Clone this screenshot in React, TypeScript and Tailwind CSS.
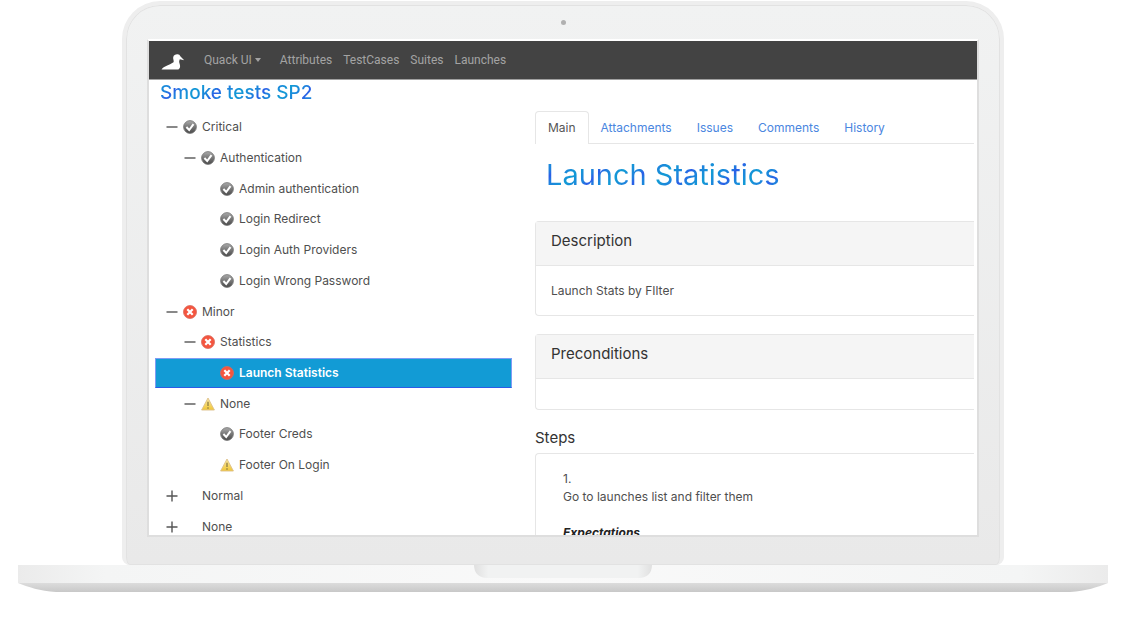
import { ReactNode } from "react";

type Status = "passed" | "failed" | "warning";

interface TreeNode {
  label: string;
  level: 0 | 1 | 2;
  toggle?: "open" | "closed";
  status?: Status;
  selected?: boolean;
}

const treeNodes: TreeNode[] = [
  { label: "Critical", level: 0, toggle: "open", status: "passed" },
  { label: "Authentication", level: 1, toggle: "open", status: "passed" },
  { label: "Admin authentication", level: 2, status: "passed" },
  { label: "Login Redirect", level: 2, status: "passed" },
  { label: "Login Auth Providers", level: 2, status: "passed" },
  { label: "Login Wrong Password", level: 2, status: "passed" },
  { label: "Minor", level: 0, toggle: "open", status: "failed" },
  { label: "Statistics", level: 1, toggle: "open", status: "failed" },
  { label: "Launch Statistics", level: 2, status: "failed", selected: true },
  { label: "None", level: 1, toggle: "open", status: "warning" },
  { label: "Footer Creds", level: 2, status: "passed" },
  { label: "Footer On Login", level: 2, status: "warning" },
  { label: "Normal", level: 0, toggle: "closed" },
  { label: "None", level: 0, toggle: "closed" },
];

const indents = ["pl-[10px]", "pl-[28px]", "pl-[64px]"];
const navLinks = ["Attributes", "TestCases", "Suites", "Launches"];
const tabs = ["Attachments", "Issues", "Comments", "History"];

const gradientText =
  "bg-[repeating-linear-gradient(135deg,#129bd5_0px,#1f7fde_12px,#2b5ce8_16px,#1f7fde_20px,#129bd5_32px)] bg-clip-text text-transparent";

function StatusIcon({ status }: { status: Status }) {
  if (status === "warning") {
    return (
      <svg viewBox="0 0 14 14" className="size-3.5" aria-hidden="true">
        <defs>
          <linearGradient id="warning" x1="0" y1="0" x2="0" y2="1">
            <stop offset="0" stopColor="#fbeba4" />
            <stop offset="1" stopColor="#f0c636" />
          </linearGradient>
        </defs>
        <path d="M7 1 13.400 13H.6Z" fill="url(#warning)" stroke="#dcc08a" strokeWidth="0.9" strokeLinejoin="round" />
        <path d="M7 4.800v4.200M7 10.300v1.400" stroke="#857540" strokeWidth="1.200" />
      </svg>
    );
  }
  if (status === "failed") {
    return (
      <svg viewBox="0 0 14 14" className="size-3.5" aria-hidden="true">
        <circle cx="7" cy="7" r="6.500" fill="#f4553f" stroke="#d9695c" strokeWidth="0.8" />
        <path d="m4.300 4.300 5.400 5.400m0-5.400L4.300 9.700" stroke="#fff" strokeWidth="2.200" />
      </svg>
    );
  }
  return (
    <svg viewBox="0 0 14 14" className="size-3.5" aria-hidden="true">
      <defs>
        <linearGradient id="passed" x1="0" y1="0" x2="0" y2="1">
          <stop offset="0" stopColor="#ababab" />
          <stop offset="0.5" stopColor="#777" />
          <stop offset="1" stopColor="#484848" />
        </linearGradient>
      </defs>
      <circle cx="7" cy="7" r="6.400" fill="url(#passed)" stroke="#757575" strokeWidth="0.8" />
      <path d="m3.400 7 2.800 3 4.300-5.800" fill="none" stroke="#fff" strokeWidth="2" />
    </svg>
  );
}

function ToggleIcon({ open }: { open: boolean }) {
  return (
    <svg viewBox="0 0 12 12" className="size-3" stroke="#555" strokeWidth="1.400" aria-hidden="true">
      <path d={open ? "M.5 6h11" : "M.5 6h11M6 .5v11"} />
    </svg>
  );
}

function TreeRow({ node }: { node: TreeNode }) {
  return (
    <li
      className={`flex items-center border ${indents[node.level]} ${
        node.selected
          ? "border-[#7f9cf5] border-b-[#2b5ce8] bg-[#129bd5] font-semibold text-white"
          : "border-transparent"
      }`}
    >
      {node.toggle && (
        <button type="button" aria-label={`Toggle ${node.label}`} className="mr-[5px] w-3">
          <ToggleIcon open={node.toggle === "open"} />
        </button>
      )}
      <span className="mr-[5px] w-3.5">{node.status && <StatusIcon status={node.status} />}</span>
      <a href="#">{node.label}</a>
    </li>
  );
}

function Card({ title, children }: { title: string; children?: ReactNode }) {
  return (
    <section className="rounded-l border border-r-0 border-[#e6e6e6]">
      <h3 className="h-[44px] border-b border-[#e6e6e6] bg-[#f5f5f5] px-[15px] pt-2 text-[15px] leading-[22px] text-[#333]">
        {title}
      </h3>
      {children}
    </section>
  );
}

function Navbar() {
  return (
    <nav className="flex h-[39px] items-center border-b border-[#a0a0a0] bg-[#434343] pb-px pl-3 font-[Roboto,sans-serif] text-[12px] text-[#a3a3a3]">
      <a href="#" aria-label="Home" className="pt-1">
        <svg viewBox="0 0 24 16" className="h-4 w-6" fill="#fff" aria-hidden="true">
          <path d="M.5 15.400C3 12 8 11.500 12.500 8.300 13.300 7 11.800 5 12.200 3.200 12.700 1 14.500.2 16.500.3c1.600.1 2.300.9 2.800 1.900l3.900 4.100-4.400-1.100c-.5 1.300-.9 2.200-.4 3.700.9 2.800 1.300 4.800-1 6.500Z" />
        </svg>
      </a>
      <button type="button" className="ml-[19px] flex items-center gap-[3px]">
        Quack UI
        <span className="border-x-[3px] border-t-[4px] border-x-transparent border-t-current" />
      </button>
      <div className="ml-[19px] flex gap-[11px]">
        {navLinks.map((link) => (
          <a key={link} href="#">
            {link}
          </a>
        ))}
      </div>
    </nav>
  );
}

function TestDetails() {
  return (
    <main>
      <div className="mt-[31px] flex h-[33px] border-b border-[#e6e6e6] text-[12px] text-[#4a86e0]">
        <button
          type="button"
          className="-mb-px rounded-t border border-b-0 border-[#e6e6e6] bg-white px-3 text-[#555]"
        >
          Main
        </button>
        {tabs.map((tab) => (
          <button key={tab} type="button" className="pt-px pr-[13px] pl-3">
            {tab}
          </button>
        ))}
      </div>
      <h1 className="mt-3 mb-[27px] pl-[11px] text-[29px] leading-[38px]">
        <span className={gradientText}>Launch Statistics</span>
      </h1>
      <div className="flex flex-col gap-[18px]">
        <Card title="Description">
          <p className="h-[49px] px-[15px] pt-4 leading-[18px]">Launch Stats by FIlter</p>
        </Card>
        <Card title="Preconditions">
          <div className="h-[30px]" />
        </Card>
      </div>
      <h3 className="mt-4 mb-[3px] text-[15px] leading-[24px] text-[#333]">Steps</h3>
      <section className="rounded-l border border-r-0 border-[#e6e6e6] px-[27px] pt-4 leading-[18px]">
        <p>1.</p>
        <p>Go to launches list and filter them</p>
        <p className="mt-[18px] pb-8 font-bold text-[#222] italic">Expectations</p>
      </section>
    </main>
  );
}

export default function App() {
  return (
    <div className="min-h-screen bg-white px-[18px] pt-px font-[Inter,sans-serif]">
      <div className="mx-[104px] rounded-t-[38px] rounded-b-lg border-4 border-b-0 border-[#eee] bg-linear-to-b from-[#f1f2f2] to-[#e9e9e9] px-[21px] shadow-[inset_0_0_0_1px_#e2e2e2]">
        <div className="flex h-[34px] items-center justify-center">
          <span className="size-[5px] rounded-full bg-[#b0b0b0]" />
        </div>
        <div className="border-2 border-[#dedede] border-t-white bg-white">
          <div className="aspect-[828/494] overflow-hidden">
            <Navbar />
            <div className="grid grid-cols-[357fr_439fr] gap-[23px] pr-[3px] pl-1.5 text-[12px] text-[#4f4f4f]">
              <aside>
                <h2 className="pl-[5px] text-[19px] leading-[25px] font-medium">
                  <span className={gradientText}>Smoke tests SP2</span>
                </h2>
                <ul className="mt-[7px] grid h-[430px] auto-rows-fr">
                  {treeNodes.map((node, index) => (
                    <TreeRow key={index} node={node} />
                  ))}
                </ul>
              </aside>
              <TestDetails />
            </div>
          </div>
        </div>
        <div className="h-7" />
      </div>
      <svg viewBox="0 0 1090 27" className="block w-full" aria-hidden="true">
        <defs>
          <linearGradient id="deck">
            <stop offset="0" stopColor="#ebebeb" />
            <stop offset="0.08" stopColor="#f4f5f5" />
            <stop offset="0.5" stopColor="#f9f9f9" />
            <stop offset="0.92" stopColor="#f4f5f5" />
            <stop offset="1" stopColor="#ebebeb" />
          </linearGradient>
          <linearGradient id="underside" x1="0" y1="0" x2="0" y2="1">
            <stop offset="0" stopColor="#dcdcdc" />
            <stop offset="1" stopColor="#c8c8c8" />
          </linearGradient>
          <linearGradient id="notch">
            <stop offset="0" stopColor="#e0e0e0" />
            <stop offset="0.08" stopColor="#f1f2f2" />
            <stop offset="0.92" stopColor="#f1f2f2" />
            <stop offset="1" stopColor="#e0e0e0" />
          </linearGradient>
        </defs>
        <path d="M0 18h1090c-10 4-22 8-38 9H38C22 26 10 22 0 18Z" fill="url(#underside)" />
        <path d="M0 0h1090v18H0Z" fill="url(#deck)" />
        <path d="M456 0h178c0 8-5 13-13 13H469c-8 0-13-5-13-13Z" fill="url(#notch)" />
      </svg>
    </div>
  );
}
